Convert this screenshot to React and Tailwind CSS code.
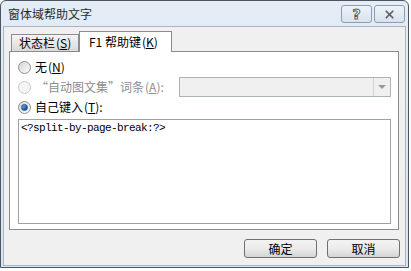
import { X } from 'lucide-react'

const ui = "font-['SimSun','Noto_Sans_CJK_SC',sans-serif]"

function Radio({ checked, disabled }) {
  return (
    <span
      className={`relative flex h-[13px] w-[13px] shrink-0 items-center justify-center rounded-full border ${
        disabled ? 'border-[#c9c9c9] bg-[#f4f4f4]' : 'border-[#8e8f8f] bg-gradient-to-br from-[#d6d6d6] to-[#fbfbfb]'
      }`}
    >
      {checked && (
        <span className="h-[7px] w-[7px] rounded-full border border-[#1b4f8f] bg-gradient-to-br from-[#6fb1f0] to-[#0b3f86]" />
      )}
    </span>
  )
}

function Key({ k }) {
  return (
    <span className="ml-[1px]">
      (<span className="underline underline-offset-1">{k}</span>)
    </span>
  )
}

function Button({ children }) {
  return (
    <button className="flex h-[19px] w-[73px] items-center justify-center rounded-[3px] border border-[#707070] bg-gradient-to-b from-[#f3f3f3] via-[#ebebeb] to-[#d4d4d4] text-[12px] leading-none text-black">
      {children}
    </button>
  )
}

export default function App() {
  return (
    <div className={`h-[271px] w-[411px] overflow-hidden bg-white ${ui}`}>
      <div className="flex h-[268px] w-[409px] flex-col rounded-t-[6px] border border-[#4d5560] bg-gradient-to-b from-[#e4ecf6] to-[#d9e4f1]">
        {/* Title bar */}
        <div className="flex h-[25px] shrink-0 items-start">
          <span className="ml-[7px] mt-[7px] text-[12px] leading-none text-[#2b2b2b]">窗体域帮助文字</span>
          <div className="ml-auto mr-[3px] mt-[4px] flex gap-[2px]">
            <div className="flex h-[18px] w-[31px] items-center justify-center rounded-[3px] border border-[#8d9cb1] bg-gradient-to-b from-[#eef3f9] to-[#d8e2ee]">
              <span className="font-['DejaVu_Sans',sans-serif] text-[14px] font-bold leading-none text-white [-webkit-text-stroke:1px_#5a5f66]">?</span>
            </div>
            <div className="flex h-[18px] w-[31px] items-center justify-center rounded-[3px] border border-[#8d9cb1] bg-gradient-to-b from-[#eef3f9] to-[#d8e2ee]">
              <X size={13} strokeWidth={3.2} className="text-[#5a5f66]" />
            </div>
          </div>
        </div>

        {/* Client area */}
        <div className="mx-[2px] mb-[1px] flex flex-1 flex-col border border-[#a9b5c4] bg-[#f0f0f0] px-[5px] pt-[4px]">
          {/* Tabs */}
          <div className="flex items-end pl-[2px]">
            <div className="flex h-[17px] w-[68px] items-center border border-b-0 border-[#898c95] bg-gradient-to-b from-[#f4f4f4] to-[#dadada] pl-[7px] text-[12px] leading-none text-black">
              状态栏<Key k="S" />
            </div>
            <div className="relative z-10 -mb-px flex h-[21px] w-[93px] items-center border border-b-0 border-[#898c95] bg-white pl-[9px] text-[12px] leading-none text-black">
              F1 帮助键<Key k="K" />
            </div>
          </div>

          {/* Panel */}
          <div className="flex h-[179px] w-[390px] flex-col border border-[#898c95] bg-white px-[8px] pt-[5px]">
            <div className="flex h-[20px] items-center gap-[4px] text-[12px] leading-none text-black">
              <Radio />
              <span>无<Key k="N" /></span>
            </div>
            <div className="flex h-[20px] items-center text-[12px] leading-none text-[#8d8d8d]">
              <Radio disabled />
              <span className="ml-[5px]">“自动图文集”词条<Key k="A" />:</span>
              <div className="ml-auto mr-[-1px] flex h-[20px] w-[212px] items-stretch border border-[#adb2b5] bg-[#f0f0f0]">
                <div className="ml-auto flex w-[17px] items-center justify-center border-l border-[#d2d2d2]">
                  <span className="h-0 w-0 border-x-[4px] border-t-[4px] border-x-transparent border-t-[#9a9a9a]" />
                </div>
              </div>
            </div>
            <div className="flex h-[20px] items-center gap-[4px] text-[12px] leading-none text-black">
              <Radio checked />
              <span>自己键入<Key k="T" />:</span>
            </div>
            <div className="mt-[2px] h-[105px] w-[373px] border border-[#a0a0a8] px-[2px] pt-[2px] font-['Liberation_Mono',monospace] text-[11px] leading-[13px] tracking-[-0.6px] text-black">
              &lt;?split-by-page-break:?&gt;
            </div>
          </div>

          {/* Buttons */}
          <div className="mt-[9px] flex justify-end gap-[10px]">
            <Button>确定</Button>
            <Button>取消</Button>
          </div>
        </div>
      </div>
    </div>
  )
}
